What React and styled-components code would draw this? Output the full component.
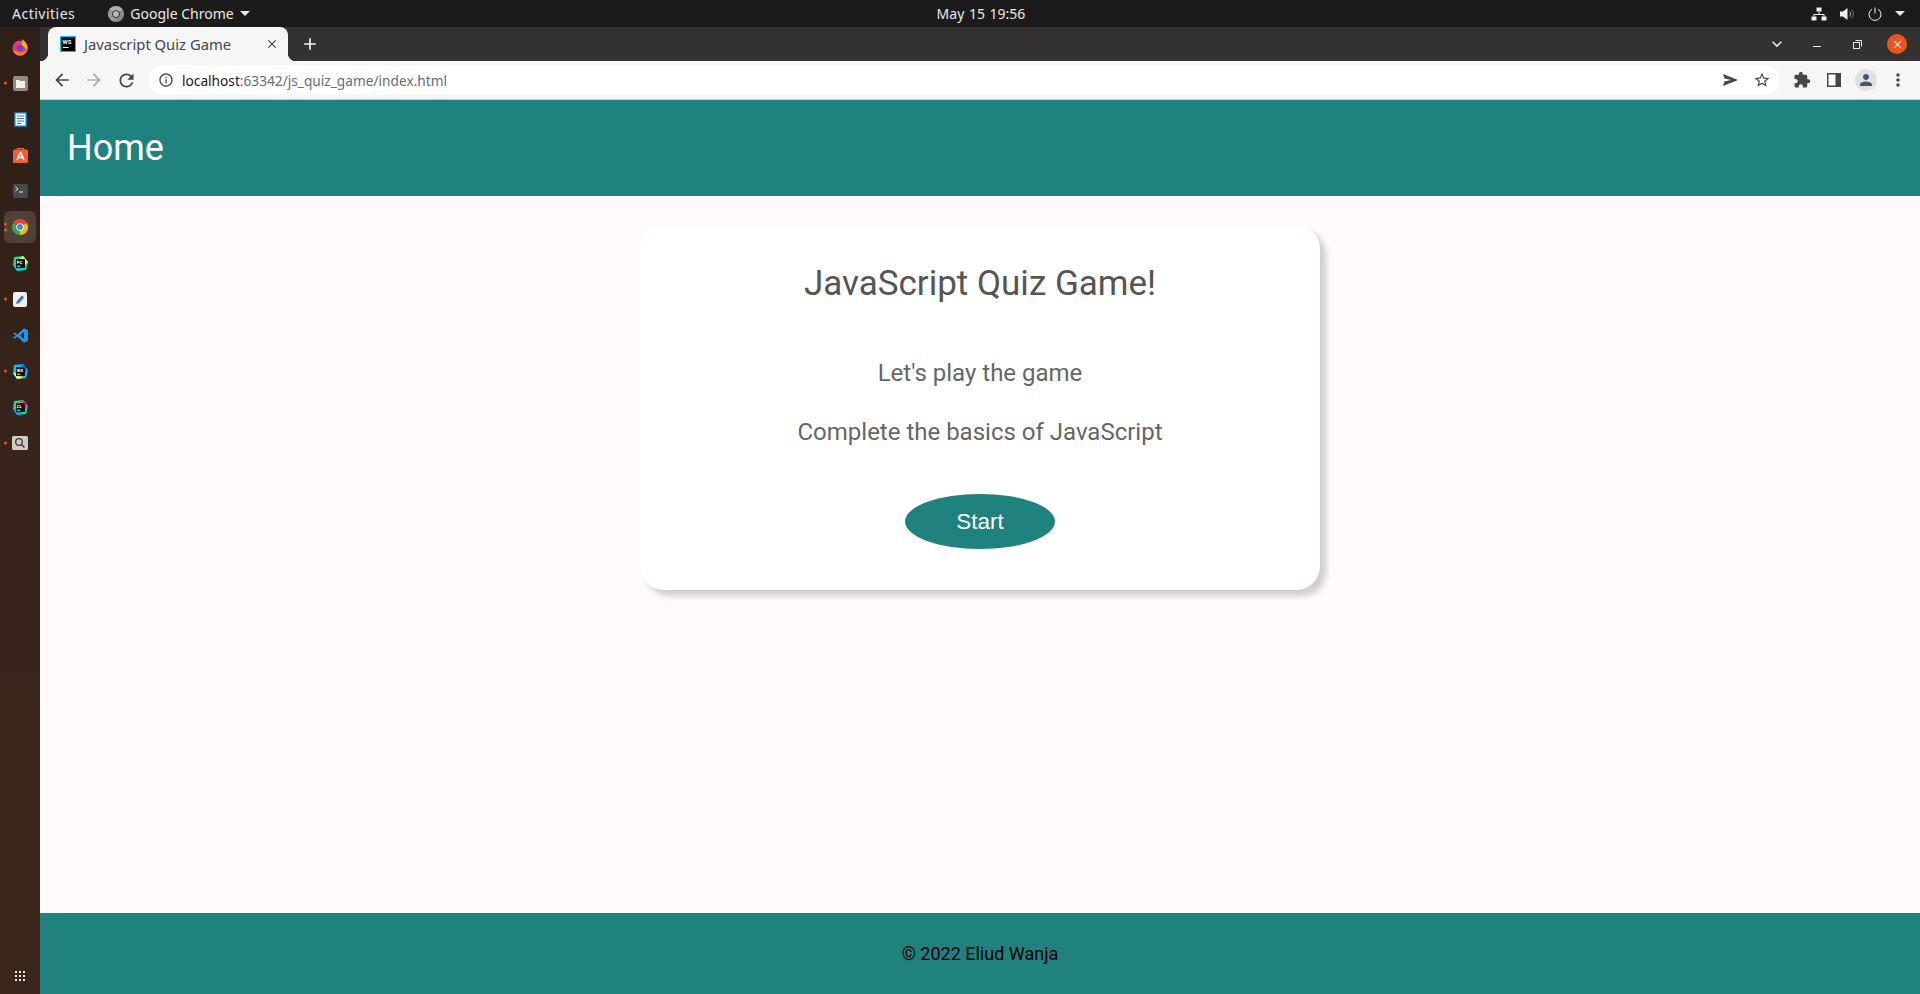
import React from "react";
import styled, { createGlobalStyle } from "styled-components";
import { MdArrowBack, MdArrowForward, MdRefresh, MdInfoOutline, MdStarBorder, MdExtension, MdClose, MdAdd, MdExpandMore, MdMoreVert, MdPerson } from "react-icons/md";

const teal = "#20827e";
const chromeFont = `"Noto Sans", "Open Sans", sans-serif`;

const GlobalStyle = createGlobalStyle`
  html, body {
    margin: 0;
    padding: 0;
    height: 100%;
    overflow: hidden;
  }
  * {
    box-sizing: border-box;
  }
`;

const Screen = styled.div`
  width: 1920px;
  height: 994px;
  display: flex;
  flex-direction: column;
  font-family: Roboto, sans-serif;
`;

/* gnome top bar */
const TopBar = styled.div`
  height: 27px;
  flex: none;
  display: grid;
  grid-template-columns: 1fr auto 1fr;
  align-items: center;
  background: #1b1b1b;
  color: #e8e8e8;
  font-family: ${chromeFont};
  font-size: 14px;
  padding: 0 12px;
`;

const TopLeft = styled.div`
  display: flex;
  align-items: center;
  gap: 33px;
`;

const Activities = styled.span`
  letter-spacing: 0.5px;
`;

const AppMenu = styled.div`
  display: flex;
  align-items: center;
  gap: 6px;
`;

const Clock = styled.div`
  margin-left: 42px;
  word-spacing: 1px;
`;

const TopRight = styled.div`
  display: flex;
  align-items: center;
  justify-content: flex-end;
  gap: 13px;
  padding-right: 3px;
`;

const Caret = styled.span`
  display: inline-block;
  width: 0;
  height: 0;
  border-left: 5px solid transparent;
  border-right: 5px solid transparent;
  border-top: 5px solid #e8e8e8;
`;

const Body = styled.div`
  flex: 1;
  display: flex;
  min-height: 0;
`;

/* ubuntu dock */
const Dock = styled.nav`
  width: 40px;
  flex: none;
  display: flex;
  flex-direction: column;
  padding-top: 2px;
  background: linear-gradient(180deg, #2e1f17 0%, #38241a 45%, #3a261a 100%);
`;

const DockItem = styled.div`
  position: relative;
  height: 36px;
  flex: none;
  display: flex;
  align-items: center;
  justify-content: center;
  margin-top: ${(p) => (p.$bottom ? "auto" : "0")};
  &::before {
    content: "";
    position: absolute;
    left: 4px;
    top: 2px;
    width: 32px;
    height: 32px;
    border-radius: 6px;
    background: ${(p) => (p.$active ? "rgba(255, 255, 255, 0.14)" : "transparent")};
  }
  svg {
    position: relative;
  }
`;

const RunDots = styled.div`
  position: absolute;
  left: 4px;
  top: 50%;
  transform: translateY(-50%);
  display: flex;
  flex-direction: column;
  gap: 3px;
  z-index: 1;
`;

const RunDot = styled.span`
  width: 3px;
  height: 3px;
  border-radius: 50%;
  background: #e95420;
`;

const Browser = styled.div`
  flex: 1;
  min-width: 0;
  display: flex;
  flex-direction: column;
`;

const TabStrip = styled.div`
  height: 34px;
  flex: none;
  display: flex;
  align-items: flex-end;
  background: #333132;
  padding-left: 8px;
  padding-right: 3px;
`;

const Tab = styled.div`
  position: relative;
  width: 240px;
  height: 34px;
  display: flex;
  align-items: center;
  background: #f6f6f6;
  border-radius: 8px 8px 0 0;
  padding: 0 9px 0 12px;
  font-family: ${chromeFont};
  font-size: 14.8px;
  color: #45474a;
  &::before,
  &::after {
    content: "";
    position: absolute;
    bottom: 0;
    width: 8px;
    height: 8px;
  }
  &::before {
    left: -8px;
    background: radial-gradient(circle at 0 0, transparent 8px, #f6f6f6 8.5px);
  }
  &::after {
    right: -8px;
    background: radial-gradient(circle at 100% 0, transparent 8px, #f6f6f6 8.5px);
  }
`;

const TabTitle = styled.span`
  flex: 1;
  margin-left: 8px;
  white-space: nowrap;
`;

const NewTab = styled.div`
  width: 28px;
  height: 34px;
  margin-left: 8px;
  display: flex;
  align-items: center;
  justify-content: center;
  color: #f1f1f1;
`;

const WindowControls = styled.div`
  margin-left: auto;
  height: 34px;
  display: flex;
  align-items: center;
`;

const WindowButton = styled.div`
  width: 40px;
  height: 34px;
  display: flex;
  align-items: center;
  justify-content: center;
  color: #e6e6e6;
`;

const CloseCircle = styled.div`
  width: 20px;
  height: 20px;
  border-radius: 50%;
  background: #e95420;
  color: #fff;
  display: flex;
  align-items: center;
  justify-content: center;
`;

const Toolbar = styled.div`
  height: 39px;
  flex: none;
  display: flex;
  align-items: center;
  background: #f6f6f6;
  border-bottom: 1px solid #c4c7c5;
  padding: 0 6px;
`;

const ToolButton = styled.div`
  width: 32px;
  height: 32px;
  flex: none;
  display: flex;
  align-items: center;
  justify-content: center;
  color: ${(p) => (p.$disabled ? "#a9a9a9" : "#45474a")};
`;

const Omnibox = styled.div`
  flex: 1;
  height: 30px;
  margin-left: 6px;
  margin-right: 6px;
  display: flex;
  align-items: center;
  background: #fff;
  border-radius: 15px;
  padding: 0 2px 0 10px;
  font-family: ${chromeFont};
  font-size: 13.7px;
`;

const Url = styled.div`
  flex: 1;
  margin-left: 8px;
  color: #6a6c70;
`;

const Host = styled.span`
  color: #1a1a1a;
`;

const OmniAction = styled.div`
  width: 32px;
  height: 30px;
  display: flex;
  align-items: center;
  justify-content: center;
  color: #45474a;
`;

const Avatar = styled.div`
  width: 22px;
  height: 22px;
  border-radius: 50%;
  background: #dfe1e5;
  color: #45556b;
  display: flex;
  align-items: center;
  justify-content: center;
`;

/* the page itself */
const Page = styled.div`
  flex: 1;
  min-height: 0;
  display: flex;
  flex-direction: column;
  background: #fffafa;
`;

const Header = styled.header`
  height: 96px;
  flex: none;
  display: flex;
  align-items: center;
  padding-left: 27px;
  background: ${teal};
`;

const HeaderTitle = styled.h2`
  margin: 0;
  font-size: 36px;
  font-weight: 400;
  color: #fff;
`;

const Main = styled.main`
  flex: 1;
  padding-top: 29px;
`;

const Card = styled.section`
  width: 680px;
  height: 365px;
  margin: 0 auto;
  padding-top: 38px;
  display: flex;
  flex-direction: column;
  align-items: center;
  background: #fff;
  border-radius: 24px;
  box-shadow: 6px 6px 6px rgba(0, 0, 0, 0.18);
`;

const CardTitle = styled.h1`
  margin: 0 0 55px;
  font-size: 35px;
  font-weight: 400;
  color: #555;
`;

const CardText = styled.p`
  margin: 0 0 31px;
  font-size: 24px;
  font-weight: 400;
  color: #666;
`;

const StartButton = styled.button`
  width: 150px;
  height: 55px;
  margin-top: 17px;
  border: none;
  border-radius: 50%;
  background: ${teal};
  color: #fff;
  font-family: "Liberation Sans", Arial, sans-serif;
  font-size: 22.4px;
`;

const Footer = styled.footer`
  height: 81px;
  flex: none;
  display: flex;
  align-items: center;
  justify-content: center;
  background: ${teal};
  color: #000;
  font-size: 18px;
`;

const FirefoxIcon = () => (
  <svg width="18" height="18" viewBox="0 0 18 18">
    <circle cx="9" cy="10" r="7.5" fill="#e8387c" />
    <path d="M1.6 11a7.5 7.5 0 0 0 14.9 0C15 14 11 15 8 14 5 13.5 3 12.5 1.6 11z" fill="#ff7a1f" />
    <path d="M11 1c3 2 5.5 5 5.5 9 0 1-.2 2-.6 3-1-3-3-5-6-6 1.500-2 1.500-4 1.100-6z" fill="#ffb000" />
    <circle cx="9" cy="10" r="3.300" fill="#6b3fc4" />
  </svg>
);

const FilesIcon = () => (
  <svg width="15" height="15" viewBox="0 0 15 15">
    <rect width="15" height="15" rx="2" fill="#8f8a7f" />
    <path d="M3 4h3l1 1h5v7H3z" fill="#f2f0ec" />
  </svg>
);

const WriterIcon = () => (
  <svg width="13" height="15" viewBox="0 0 13 15">
    <path d="M0 1a1 1 0 0 1 1-1h11a1 1 0 0 1 1 1v13a1 1 0 0 1-1 1H1a1 1 0 0 1-1-1z" fill="#1b6fa8" />
    <rect x="1.500" y="1.500" width="10" height="12" fill="#fff" />
    <path d="M3 4h7M3 6.500h7M3 9h7M3 11.500h4" stroke="#2a7fc0" strokeWidth="1.200" />
  </svg>
);

const SoftwareIcon = () => (
  <svg width="15" height="16" viewBox="0 0 15 16">
    <path d="M4.500 3V1.500h6V3" fill="none" stroke="#e8673a" strokeWidth="1.200" />
    <rect y="2.500" width="15" height="13.500" rx="1.500" fill="#e8623a" />
    <path d="M7.500 5L4 13M7.500 5L11 13M4.500 10.500h6" stroke="#fff" strokeWidth="1.500" fill="none" />
  </svg>
);

const TerminalIcon = () => (
  <svg width="15" height="14" viewBox="0 0 15 14">
    <rect width="15" height="14" rx="2" fill="#4a4a4c" />
    <path d="M2.500 3l2.500 2-2.500 2M6 8h4" stroke="#eee" strokeWidth="1" fill="none" />
  </svg>
);

const ChromeIcon = ({ mono }) => (
  <svg width="16" height="16" viewBox="0 0 16 16">
    <path d="M8 8L1.070 4A8 8 0 0 1 14.930 4z" fill={mono ? "#b0b0b0" : "#ea4335"} />
    <path d="M8 8L14.930 4A8 8 0 0 1 8 16z" fill={mono ? "#8a8a8a" : "#fbbc05"} />
    <path d="M8 8L8 16A8 8 0 0 1 1.070 4z" fill={mono ? "#9a9a9a" : "#34a853"} />
    <circle cx="8" cy="8" r="3.700" fill={mono ? "#1b1b1b" : "#fff"} />
    <circle cx="8" cy="8" r="2.900" fill={mono ? "#bbb" : "#4285f4"} />
  </svg>
);

const JetBrainsIcon = ({ label, c1, c2, c3 }) => (
  <svg width="15" height="15" viewBox="0 0 15 15">
    <path d="M1 1l9-1 5 6-2 8-9 1-4-6z" fill={c1} />
    <path d="M10 0l5 6-3 3-5-7z" fill={c2} />
    <path d="M0 9l4 6 6-1-6-5z" fill={c3} />
    <rect x="3" y="3" width="9" height="9" fill="#111" />
    <text x="3.800" y="7.500" fontSize="4.200" fontWeight="700" fontFamily="Roboto, sans-serif" fill="#fff">{label}</text>
    <rect x="4" y="9.800" width="3.500" height="0.800" fill="#fff" />
  </svg>
);

const EditorIcon = () => (
  <svg width="14" height="15" viewBox="0 0 14 15">
    <rect width="14" height="15" rx="2" fill="#f0f0f0" />
    <path d="M3 12l1-3 5-5.500 2 2L6 11z" fill="#2f6fde" />
  </svg>
);

const VsCodeIcon = () => (
  <svg width="15" height="15" viewBox="0 0 24 24">
    <path d="M17.500 0.500L24 3.500v17l-6.500 3L7 13.500 2.500 17 0 15.500 4.500 12 0 8.500 2.500 7 7 10.500zM17.500 6.500L11 12l6.500 5.500z" fill="#2196e3" />
  </svg>
);

const SearchAppIcon = () => (
  <svg width="16" height="14" viewBox="0 0 16 14">
    <rect width="16" height="14" rx="1.500" fill="#cfcbc4" />
    <circle cx="7" cy="6" r="3.300" fill="none" stroke="#3a3a3a" strokeWidth="1.300" />
    <path d="M9.500 8.500l3 3" stroke="#3a3a3a" strokeWidth="1.500" />
  </svg>
);

const AppGrid = () => (
  <svg width="11" height="11" viewBox="0 0 11 11" fill="#e8e8e8">
    {[0, 4, 8].map((y) =>
      [0, 4, 8].map((x) => <rect key={`${x}-${y}`} x={x} y={y} width="2" height="2" />)
    )}
  </svg>
);

const WebStormTabIcon = () => (
  <svg width="16" height="16" viewBox="0 0 16 16">
    <rect width="16" height="16" fill="#07c3f2" />
    <rect x="1" y="1" width="14" height="14" fill="#000" />
    <text x="2.600" y="8" fontSize="6" fontWeight="700" fontFamily="Roboto, sans-serif" fill="#fff">WS</text>
    <rect x="3" y="11" width="5.500" height="1" fill="#fff" />
  </svg>
);

const NetworkIcon = () => (
  <svg width="16" height="14" viewBox="0 0 16 14" fill="#eee">
    <rect x="5.500" y="0.500" width="5" height="4" />
    <rect x="0.500" y="9.500" width="5" height="4" />
    <rect x="10.500" y="9.500" width="5" height="4" />
    <path d="M7.500 4.500h1V7H13.500v2.500h-1V8h-9v1.500h-1V7h5z" />
  </svg>
);

const SoundIcon = () => (
  <svg width="15" height="14" viewBox="0 0 15 14">
    <path d="M0 4.500h3L7.500 1v12L3 9.500H0z" fill="#eee" />
    <path d="M9.500 4.500a3.500 3.500 0 0 1 0 5" fill="none" stroke="#aaa" strokeWidth="1" />
    <path d="M11.500 2.500a6.500 6.500 0 0 1 0 9" fill="none" stroke="#777" strokeWidth="1" />
  </svg>
);

const PowerIcon = () => (
  <svg width="14" height="14" viewBox="0 0 14 14" fill="none" stroke="#eee" strokeWidth="1">
    <path d="M4 2.200a6 6 0 1 0 6 0" />
    <path d="M7 0.500v6" />
  </svg>
);

const SendIcon = () => (
  <svg width="15" height="12" viewBox="0 0 15 12" fill="currentColor">
    <path d="M0 0l15 6-15 6 1.500-4.500L8 6 1.500 4.500z" />
  </svg>
);

const SidePanelIcon = () => (
  <svg width="14" height="14" viewBox="0 0 14 14">
    <rect width="14" height="14" fill="#45474a" />
    <rect x="1.500" y="1.500" width="7" height="11" fill="#fff" />
  </svg>
);

const RestoreIcon = () => (
  <svg width="9" height="9" viewBox="0 0 9 9" fill="none" stroke="#e6e6e6" strokeWidth="1">
    <rect x="0.500" y="2.500" width="6" height="6" />
    <path d="M2.500 .5h6v6" />
  </svg>
);

const MinimizeIcon = () => (
  <svg width="8" height="8" viewBox="0 0 8 8">
    <rect y="6" width="8" height="1" fill="#e6e6e6" />
  </svg>
);

const dockApps = [
  { id: "firefox", icon: <FirefoxIcon /> },
  { id: "files", icon: <FilesIcon />, dots: 1 },
  { id: "writer", icon: <WriterIcon /> },
  { id: "software", icon: <SoftwareIcon /> },
  { id: "terminal", icon: <TerminalIcon /> },
  { id: "chrome", icon: <ChromeIcon />, dots: 2, active: true },
  { id: "pycharm", icon: <JetBrainsIcon label="PC" c1="#21d789" c2="#fcf84a" c3="#07c3f2" /> },
  { id: "editor", icon: <EditorIcon />, dots: 1 },
  { id: "vscode", icon: <VsCodeIcon /> },
  { id: "webstorm", icon: <JetBrainsIcon label="WS" c1="#07c3f2" c2="#087cfa" c3="#fcf84a" />, dots: 1 },
  { id: "clion", icon: <JetBrainsIcon label="CL" c1="#21d789" c2="#ed358c" c3="#009ae5" /> },
  { id: "search", icon: <SearchAppIcon />, dots: 1 },
];

export default function App() {
  return (
    <Screen>
      <GlobalStyle />
      <TopBar>
        <TopLeft>
          <Activities>Activities</Activities>
          <AppMenu>
            <ChromeIcon mono />
            <span>Google Chrome</span>
            <Caret />
          </AppMenu>
        </TopLeft>
        <Clock>May 15  19:56</Clock>
        <TopRight>
          <NetworkIcon />
          <SoundIcon />
          <PowerIcon />
          <Caret />
        </TopRight>
      </TopBar>
      <Body>
        <Dock>
          {dockApps.map((app) => (
            <DockItem key={app.id} $active={app.active}>
              {app.dots && (
                <RunDots>
                  {Array.from({ length: app.dots }).map((_, i) => (
                    <RunDot key={i} />
                  ))}
                </RunDots>
              )}
              {app.icon}
            </DockItem>
          ))}
          <DockItem $bottom>
            <AppGrid />
          </DockItem>
        </Dock>
        <Browser>
          <TabStrip>
            <Tab>
              <WebStormTabIcon />
              <TabTitle>Javascript Quiz Game</TabTitle>
              <MdClose size={14} color="#45474a" />
            </Tab>
            <NewTab>
              <MdAdd size={20} />
            </NewTab>
            <WindowControls>
              <WindowButton>
                <MdExpandMore size={20} />
              </WindowButton>
              <WindowButton>
                <MinimizeIcon />
              </WindowButton>
              <WindowButton>
                <RestoreIcon />
              </WindowButton>
              <WindowButton>
                <CloseCircle>
                  <MdClose size={13} />
                </CloseCircle>
              </WindowButton>
            </WindowControls>
          </TabStrip>
          <Toolbar>
            <ToolButton>
              <MdArrowBack size={20} />
            </ToolButton>
            <ToolButton $disabled>
              <MdArrowForward size={20} />
            </ToolButton>
            <ToolButton>
              <MdRefresh size={21} />
            </ToolButton>
            <Omnibox>
              <MdInfoOutline size={16} color="#45474a" />
              <Url>
                <Host>localhost</Host>:63342/js_quiz_game/index.html
              </Url>
              <OmniAction>
                <SendIcon />
              </OmniAction>
              <OmniAction>
                <MdStarBorder size={18} />
              </OmniAction>
            </Omnibox>
            <ToolButton>
              <MdExtension size={18} />
            </ToolButton>
            <ToolButton>
              <SidePanelIcon />
            </ToolButton>
            <ToolButton>
              <Avatar>
                <MdPerson size={18} />
              </Avatar>
            </ToolButton>
            <ToolButton>
              <MdMoreVert size={20} />
            </ToolButton>
          </Toolbar>
          <Page>
            <Header>
              <HeaderTitle>Home</HeaderTitle>
            </Header>
            <Main>
              <Card>
                <CardTitle>JavaScript Quiz Game!</CardTitle>
                <CardText>Let's play the game</CardText>
                <CardText>Complete the basics of JavaScript</CardText>
                <StartButton>Start</StartButton>
              </Card>
            </Main>
            <Footer>© 2022 Eliud Wanja</Footer>
          </Page>
        </Browser>
      </Body>
    </Screen>
  );
}
